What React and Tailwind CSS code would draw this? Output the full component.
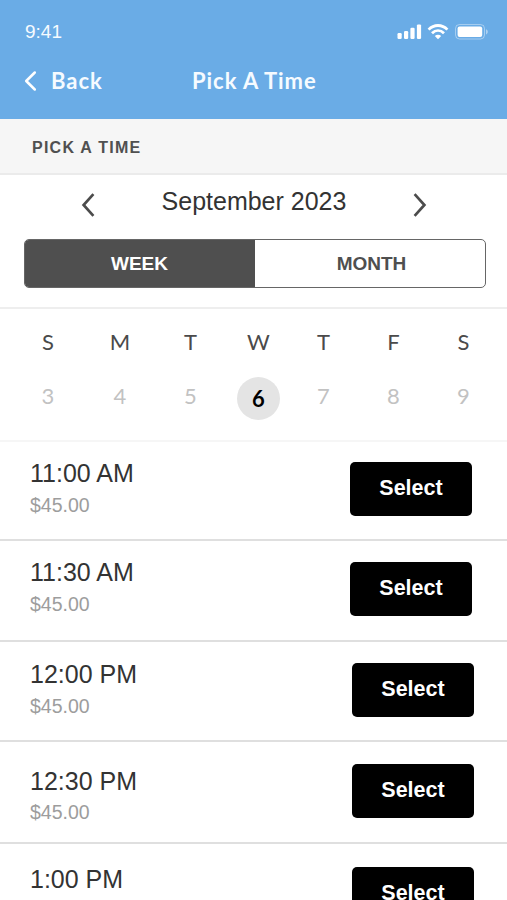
import React, { useState } from "react";

const days = [
  { label: "S", date: 3, width: "w-[72px]" },
  { label: "M", date: 4, width: "w-[72px]" },
  { label: "T", date: 5, width: "w-[69px]" },
  { label: "W", date: 6, width: "w-[67px]" },
  { label: "T", date: 7, width: "w-[63px]" },
  { label: "F", date: 8, width: "w-[77px]" },
  { label: "S", date: 9, width: "w-[63px]" },
];

const slots = [
  { time: "11:00 AM", price: "$45.00", row: "h-[99px]", text: "pt-[17px]", gap: "mt-[7px]", button: "mt-5 mr-[35px]" },
  { time: "11:30 AM", price: "$45.00", row: "h-[101px]", text: "pt-[17px]", gap: "mt-[7px]", button: "mt-[21px] mr-[35px]" },
  { time: "12:00 PM", price: "$45.00", row: "h-[100px]", text: "pt-[18px]", gap: "mt-[7px]", button: "mt-[21px] mr-[33px]" },
  { time: "12:30 PM", price: "$45.00", row: "h-[102px]", text: "pt-[25px]", gap: "mt-[6px]", button: "mt-[22px] mr-[33px]" },
  { time: "1:00 PM", row: "h-[101px]", text: "pt-[21px]", button: "mt-[23px] mr-[33px]" },
];

function StatusIcons() {
  return (
    <svg width="92" height="18" viewBox="0 0 92 18" fill="none">
      {/* signal */}
      <g fill="#fff">
        <rect x="0.5" y="10" width="4.2" height="6" rx="1.2" />
        <rect x="7" y="8" width="4.2" height="8" rx="1.2" />
        <rect x="13.4" y="4.8" width="4.2" height="11.2" rx="1.2" />
        <rect x="19.9" y="1.4" width="4.2" height="14.6" rx="1.2" />
      </g>
      {/* wifi */}
      <g stroke="#fff" strokeWidth="2.8">
        <path d="M31.6 6.6C36.9 1.1 45.1 1.1 50.4 6.6" />
        <path d="M35 10.3C38.6 6.8 43.4 6.8 47 10.3" />
      </g>
      <path d="M37.8 13C39.7 11.3 42.3 11.3 44.2 13L41 16.2Z" fill="#fff" />
      {/* battery */}
      <rect x="58.5" y="1.5" width="29" height="14.5" rx="4" stroke="#fff" strokeOpacity="0.4" />
      <rect x="60.6" y="3.6" width="24.6" height="10.4" rx="2" fill="#fff" />
      <path d="M89 6.2C91.4 7.2 91.4 10.4 89 11.4Z" fill="#fff" fillOpacity="0.45" />
    </svg>
  );
}

export default function App() {
  const [view, setView] = useState("week");
  const [selected, setSelected] = useState(6);

  return (
    <div className="w-[507px] h-[900px] overflow-hidden bg-white font-['Liberation_Sans',sans-serif] text-[#333]">
      <header className="h-[119px] bg-[#6aace6] text-[#f6fbff]">
        <div className="flex justify-between pt-[21px] pl-[25px] pr-[18px]">
          <span className="text-[19px] leading-[22px]">9:41</span>
          <div className="pt-[2px]">
            <StatusIcons />
          </div>
        </div>
        <div className="flex items-center mt-[24px] pl-[24px] font-['Lato',sans-serif] font-bold text-[22px] leading-[28px] tracking-[0.95px]">
          <button className="flex items-center w-[168px]">
            <svg width="13" height="22" viewBox="0 0 13 22" fill="none" stroke="#fff" strokeWidth="2.5" strokeLinecap="round" strokeLinejoin="round">
              <path d="M10.8 2.5L2.2 11L10.8 19.5" />
            </svg>
            <span className="ml-[14px]">Back</span>
          </button>
          <h1>Pick A Time</h1>
        </div>
      </header>

      <div className="flex items-center h-[56px] bg-[#f6f6f6] border-b-2 border-[#ebebeb] pl-[32px] pt-[3px]">
        <h2 className="text-[16px] font-bold tracking-[1.25px] text-[#505050]">PICK A TIME</h2>
      </div>

      <section className="h-[134px] border-b-2 border-[#eeeeee]">
        <div className="flex items-start justify-between pl-[81px] pr-[80px] pt-[12px]">
          <svg className="mt-[6px]" width="14" height="24" viewBox="0 0 14 24" fill="none" stroke="#4c4c4c" strokeWidth="2.7">
            <path d="M12.4 1.2L2.6 12L12.4 22.8" />
          </svg>
          <span className="text-[25px] leading-[28px]">September 2023</span>
          <svg className="mt-[6px]" width="14" height="24" viewBox="0 0 14 24" fill="none" stroke="#4c4c4c" strokeWidth="2.7">
            <path d="M1.6 1.2L11.4 12L1.6 22.8" />
          </svg>
        </div>
        <div className="flex h-[49px] mt-[22px] ml-[23.5px] w-[462px] rounded-[5px] border-[1.5px] border-[#666] overflow-hidden text-[19px] font-bold">
          <button
            onClick={() => setView("week")}
            className={view === "week" ? "w-1/2 pt-px bg-[#4f4f4f] text-white" : "w-1/2 pt-px text-[#4f4f4f]"}
          >
            WEEK
          </button>
          <button
            onClick={() => setView("month")}
            className={view === "month" ? "w-1/2 pt-px bg-[#4f4f4f] text-white" : "w-1/2 pt-px pl-[4px] text-[#4f4f4f]"}
          >
            MONTH
          </button>
        </div>
      </section>

      <section className="flex h-[133px] pl-[12px] border-b-2 border-[#f6f6f6] font-['Lato',sans-serif]">
        {days.map((day) => (
          <div key={day.date} className={`flex flex-col items-center pt-[19px] ${day.width}`}>
            <span className="text-[22px] leading-[28px] text-[#4a4a4a]">{day.label}</span>
            <button
              onClick={() => setSelected(day.date)}
              className={
                selected === day.date
                  ? "mt-[21px] size-[43px] rounded-full bg-[#e4e4e4] text-[22px] font-bold text-black"
                  : "mt-[18px] size-[43px] text-[22px] text-[#c2c2c2]"
              }
            >
              {day.date}
            </button>
          </div>
        ))}
      </section>

      {slots.map((slot) => (
        <div key={slot.time} className={`flex justify-between items-start border-b-2 border-[#dfdfdf] ${slot.row}`}>
          <div className={`pl-[30px] ${slot.text}`}>
            <div className="text-[25px] leading-[28px]">{slot.time}</div>
            {slot.price && (
              <div className={`text-[19.5px] leading-[22px] text-[#9d9d9d] ${slot.gap}`}>{slot.price}</div>
            )}
          </div>
          <button className={`w-[122px] h-[54px] pb-[2px] rounded-[5px] bg-black text-white text-[21.5px] font-bold ${slot.button}`}>
            Select
          </button>
        </div>
      ))}
    </div>
  );
}
